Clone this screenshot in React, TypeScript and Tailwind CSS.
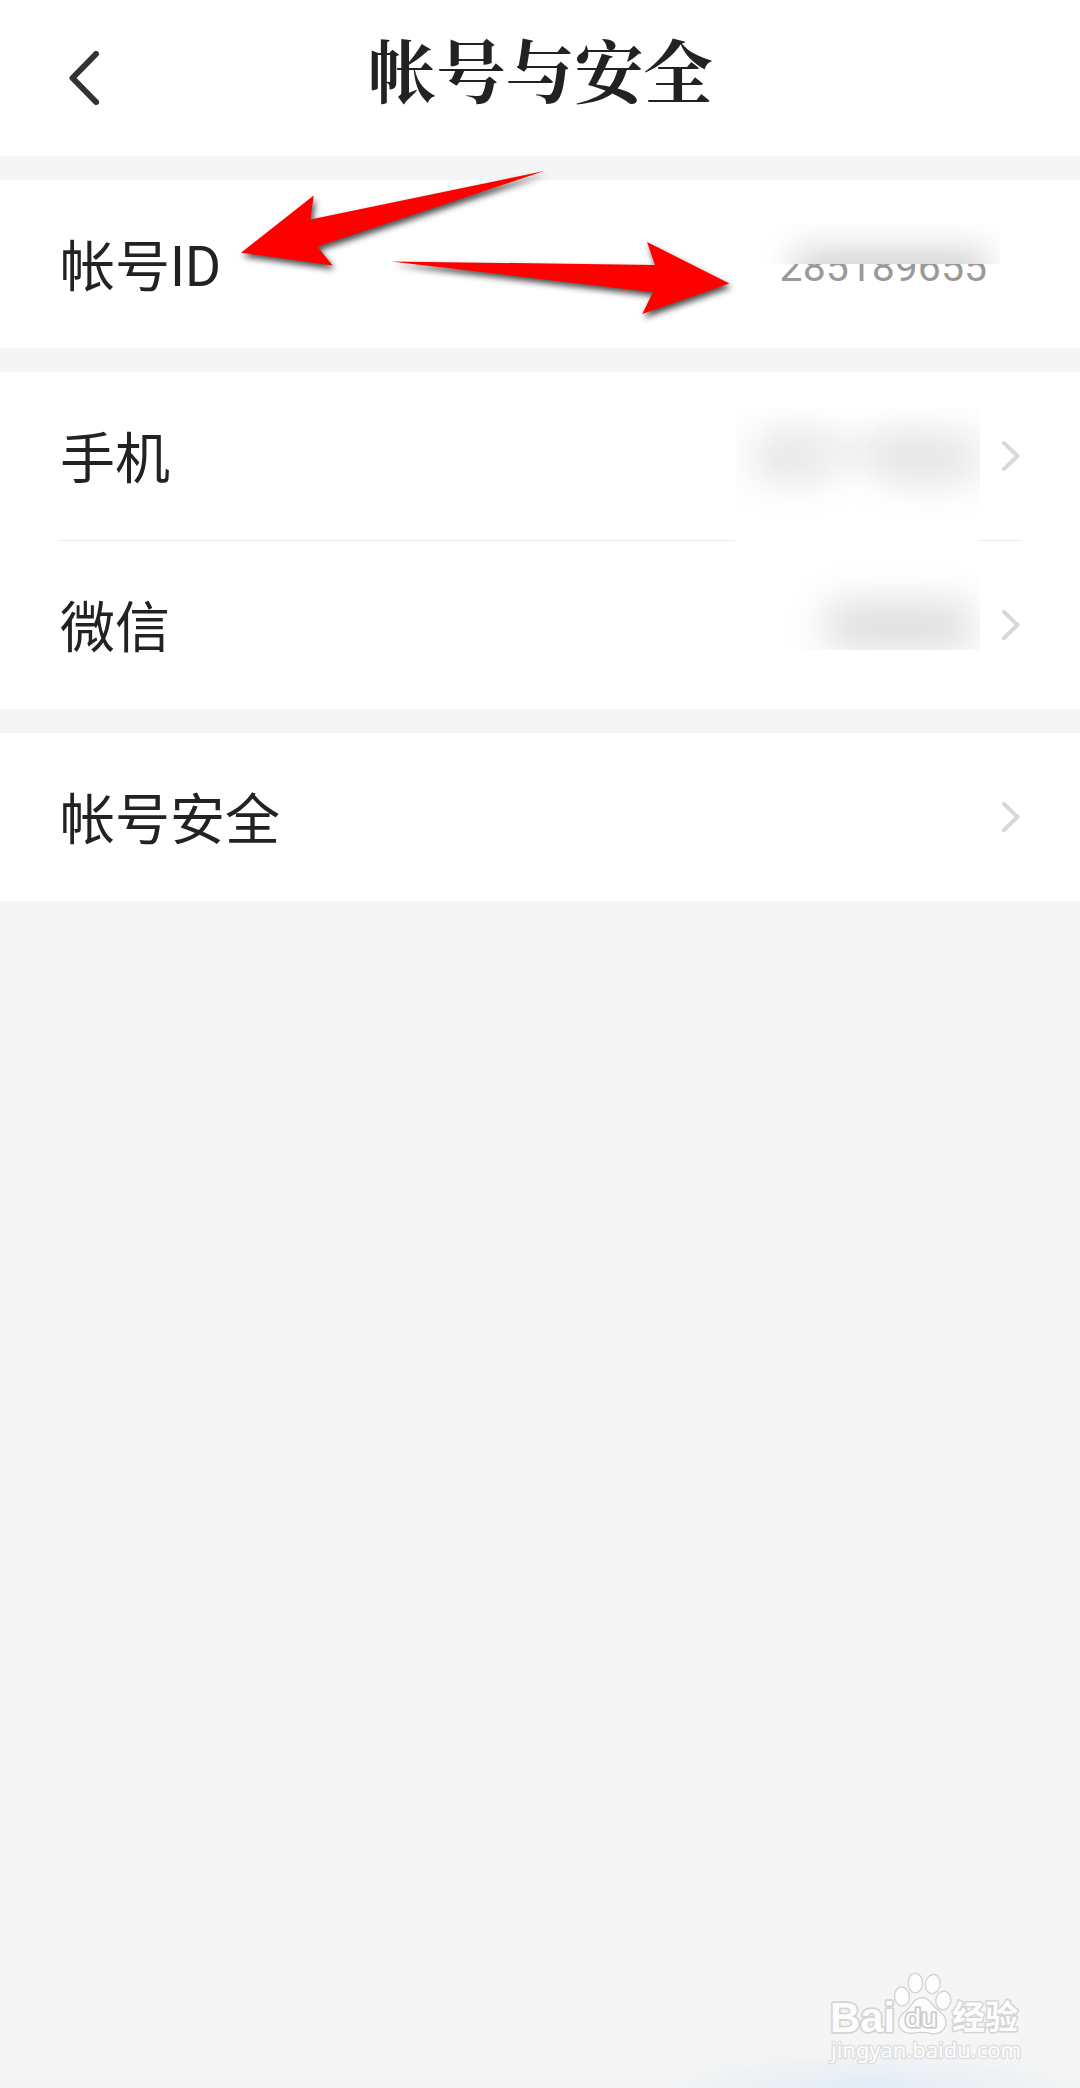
import React from "react";

interface RowProps {
  label: string;
  children?: React.ReactNode;
}

const Chevron: React.FC = () => (
  <svg width="18" height="30" viewBox="0 0 18 30" fill="none">
    <path
      d="M2 2L15.5 15L2 28"
      stroke="#d8d8d8"
      strokeWidth="4"
      strokeLinecap="round"
      strokeLinejoin="round"
    />
  </svg>
);

const Row: React.FC<RowProps> = ({ label, children }) => (
  <div className="relative flex h-[168px] items-center justify-between bg-white px-[60px]">
    <span className="pt-1.5 text-[55px] leading-[80px] text-[#222222]">
      {label}
    </span>
    {children}
  </div>
);

const Arrows: React.FC = () => (
  <svg
    className="pointer-events-none absolute left-[220px] top-[150px] drop-shadow-[2px_4px_3px_rgba(0,0,0,0.7)]"
    width="540"
    height="190"
    viewBox="220 150 540 190"
    fill="#ff0000"
  >
    <path d="M241 252.7L313.7 195.5L310.4 219.4L544.4 171L317.3 246.4L332.6 265.4Z" />
    <path d="M391.2 261.4L655 265L647 242L729.4 283.4L642.2 314L652.9 292.3Z" />
  </svg>
);

const Watermark: React.FC = () => (
  <svg
    className="absolute bottom-0 right-0"
    width="280"
    height="138"
    viewBox="0 0 280 138"
    fill="#fdfdfd"
    stroke="#d4d4d4"
    strokeLinejoin="round"
  >
    <g paintOrder="stroke">
      <text
        x="30"
        y="82"
        fontSize="42"
        fontWeight="700"
        fontFamily="Liberation Sans, sans-serif"
        textLength="65"
        lengthAdjust="spacingAndGlyphs"
        strokeWidth="3.5"
      >
        Bai
      </text>
      <g strokeWidth="2.8">
        <ellipse cx="102" cy="46.5" rx="6.7" ry="8.9" transform="rotate(-8 102 46.5)" />
        <ellipse cx="115.3" cy="33" rx="6.4" ry="9.2" />
        <ellipse cx="132.7" cy="34" rx="6.6" ry="8.9" transform="rotate(10 132.7 34)" />
        <ellipse cx="143.3" cy="50.5" rx="6.8" ry="8.6" transform="rotate(8 143.3 50.5)" />
        <path d="M122 48.5C113 48.5 112 58 106 62C100 66 98.5 71 100 76C102 81 107 83 113 82.5C118 81.5 126 81.5 131 82.8C138 84 143.5 81 145 75C146 68 143 65 138 61C131 56 130 48.5 122 48.5Z" />
      </g>
      <text
        x="105"
        y="77"
        fontSize="26"
        fontFamily="Liberation Sans, sans-serif"
        textLength="32"
        lengthAdjust="spacingAndGlyphs"
        stroke="#cccccc"
        strokeWidth="3.5"
      >
        du
      </text>
      <text
        x="152"
        y="79"
        fontSize="33"
        fontWeight="700"
        fontFamily="Noto Sans CJK SC, sans-serif"
        textLength="66"
        strokeWidth="3"
      >
        经验
      </text>
      <text
        x="31"
        y="108"
        fontSize="21"
        fontFamily="Noto Sans, sans-serif"
        textLength="190"
        lengthAdjust="spacingAndGlyphs"
        stroke="#dcdcdc"
        strokeWidth="2.5"
      >
        jingyan.baidu.com
      </text>
    </g>
  </svg>
);

const App: React.FC = () => {
  return (
    <div className="relative flex h-[2088px] w-[1080px] flex-col gap-6 overflow-hidden bg-[#f5f5f5] font-[Roboto,'Noto_Sans_CJK_SC',sans-serif]">
      <header className="flex h-[156px] items-center bg-white px-[69px]">
        <svg width="30" height="54" viewBox="0 0 30 54" fill="none">
          <path
            d="M27 3L3.5 27L27 51"
            stroke="#333333"
            strokeWidth="6"
            strokeLinecap="round"
            strokeLinejoin="round"
          />
        </svg>
        <h1 className="mr-[30px] flex-1 pb-[18px] text-center font-['Noto_Serif_CJK_SC','Noto_Serif_SC','Source_Han_Serif_SC',serif] text-[69px] leading-[100px] font-bold text-[#222222]">
          帐号与安全
        </h1>
      </header>

      <section>
        <Row label="帐号ID">
          <span className="mr-[33px] pt-1.5 text-[41px] leading-[60px] text-[#999999]">
            285189655
          </span>
          <div className="absolute left-[748px] top-[43px] h-[41px] w-[252px] overflow-hidden bg-white">
            <div className="absolute left-[48px] top-[28px] h-[44px] w-[190px] bg-[#cfcfcf] blur-[18px]" />
          </div>
        </Row>
      </section>

      <section className="relative bg-white">
        <Row label="手机">
          <Chevron />
        </Row>
        <div className="mx-[60px] h-px bg-[#ebebeb]" />
        <Row label="微信">
          <Chevron />
        </Row>
        {/* blurred phone number and nickname */}
        <div className="absolute left-[735px] top-[36px] h-[242px] w-[245px] overflow-hidden bg-white">
          <div className="absolute left-[22px] top-[32px] h-[34px] w-[66px] bg-[#d8d8d8] blur-[22px]" />
          <div className="absolute left-[60px] top-[32px] h-[24px] w-[120px] bg-[#eaeaea] blur-[17px]" />
          <div className="absolute left-[148px] top-[32px] h-[36px] w-[96px] bg-[#dadada] blur-[22px]" />
          <div className="absolute left-[92px] top-[196px] h-[44px] w-[144px] bg-[#dadada] blur-[20px]" />
        </div>
      </section>

      <section>
        <Row label="帐号安全">
          <Chevron />
        </Row>
      </section>

      <Arrows />
      <div className="absolute bottom-[-40px] left-[640px] h-[80px] w-[460px] bg-[radial-gradient(closest-side,#e0ecf8,#ebf0f4_45%,#f5f5f5)]" />
      <Watermark />
    </div>
  );
};

export default App;
